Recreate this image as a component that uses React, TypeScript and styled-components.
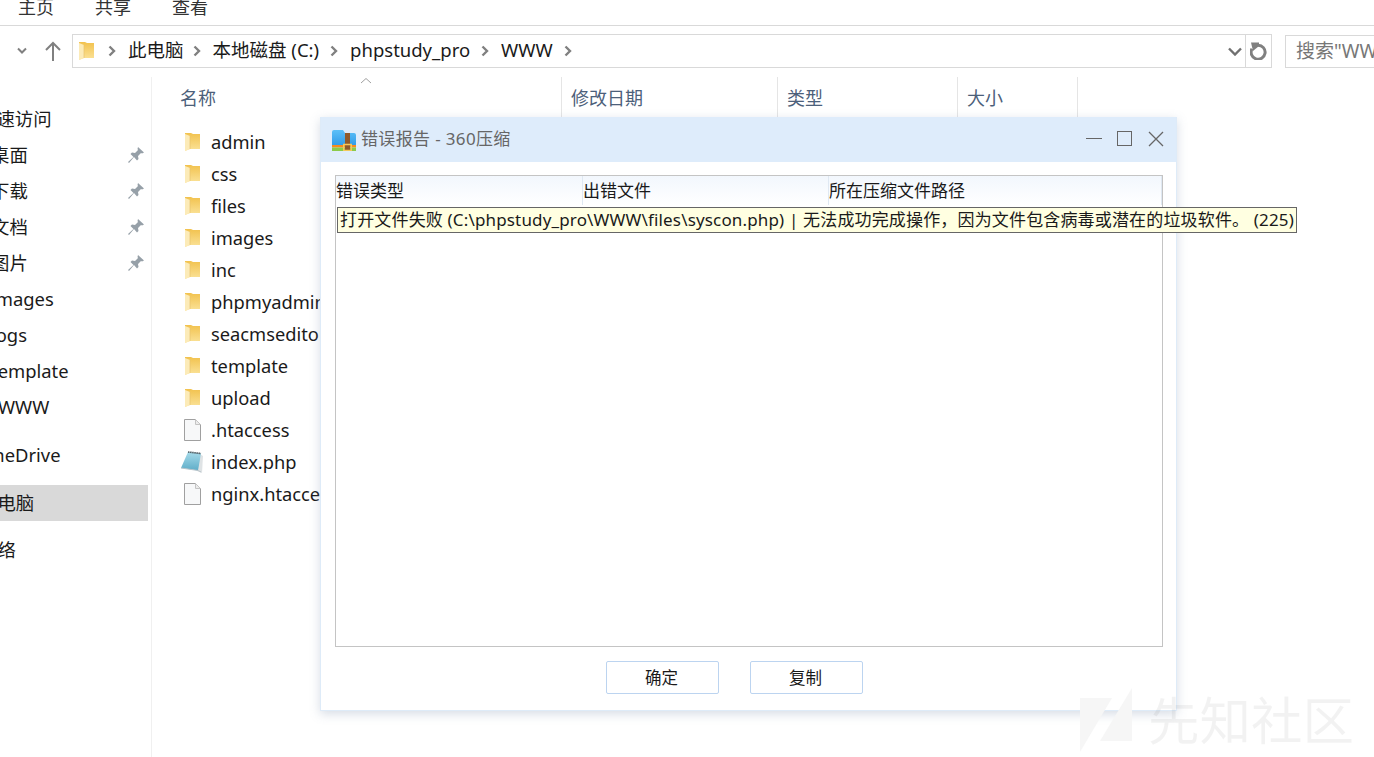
import React from 'react'
import styled, { createGlobalStyle } from 'styled-components'

const GlobalStyle = createGlobalStyle`
  html, body {
    margin: 0;
    padding: 0;
    background: #fff;
  }
  body {
    font-family: "Noto Sans", "Noto Sans CJK SC", sans-serif;
    overflow: hidden;
  }
`

const Page = styled.div`
  position: relative;
  width: 1374px;
  height: 757px;
  overflow: hidden;
  background: #fff;
  display: flex;
  flex-direction: column;
`

const Ribbon = styled.div`
  height: 25px;
  flex: none;
  display: flex;
  gap: 41px;
  padding-left: 18px;
  border-bottom: 1px solid #d9d9d9;
  overflow: hidden;
`

const RibbonTab = styled.span`
  font-size: 18px;
  line-height: 24px;
  margin-top: -5px;
  color: #333;
`

const AddressRow = styled.div`
  height: 34px;
  flex: none;
  margin-top: 8px;
  display: flex;
  align-items: center;
`

const NavIcons = styled.div`
  width: 72px;
  flex: none;
  display: flex;
  align-items: center;
  padding-left: 17px;
  gap: 17px;
  box-sizing: border-box;
`

const AddressBox = styled.div`
  width: 1200px;
  height: 34px;
  flex: none;
  box-sizing: border-box;
  border: 1px solid #d9d9d9;
  display: flex;
  align-items: center;
  padding-left: 6px;
`

const Crumb = styled.span<{ $after?: number }>`
  font-size: 18.5px;
  line-height: 26px;
  padding-bottom: 3px;
  color: #1a1a1a;
  white-space: nowrap;
  margin-right: ${(p) => p.$after ?? 11}px;
`

const CrumbArrow = styled.svg`
  width: 8px;
  height: 12px;
  flex: none;
  margin-right: 12px;
`

const FolderGap = styled.span`
  width: 14px;
  flex: none;
`

const AddressTail = styled.div`
  margin-left: auto;
  display: flex;
  align-items: center;
  height: 100%;
`

const RefreshCell = styled.div`
  width: 25px;
  height: 100%;
  margin-left: 3px;
  border-left: 1px solid #d9d9d9;
  display: flex;
  align-items: center;
  justify-content: center;
`

const SearchBox = styled.div`
  width: 89px;
  height: 33px;
  flex: none;
  margin-left: 13px;
  box-sizing: border-box;
  border: 1px solid #d9d9d9;
  border-right: none;
  font-size: 19px;
  line-height: 30px;
  padding-left: 10px;
  color: #777;
  white-space: nowrap;
  overflow: hidden;
`

const Body = styled.div`
  flex: 1;
  display: flex;
  min-height: 0;
  margin-top: 9px;
`

const Sidebar = styled.nav`
  width: 152px;
  flex: none;
  box-sizing: border-box;
  border-right: 1px solid #f0f0f0;
  padding-top: 24px;
  overflow: hidden;
`

const SideRow = styled.div<{ $gap?: number; $active?: boolean }>`
  width: 148px;
  height: 36px;
  margin-top: ${(p) => p.$gap ?? 0}px;
  display: flex;
  align-items: center;
  background: ${(p) => (p.$active ? '#d9d9d9' : 'transparent')};
  overflow: hidden;
`

const SideLabel = styled.span<{ $shift: number }>`
  margin-left: ${(p) => p.$shift}px;
  padding-bottom: 2px;
  font-size: 18.4px;
  color: #1a1a1a;
  white-space: nowrap;
  flex: 1;
`

const PinIcon = styled.svg`
  width: 16px;
  height: 16px;
  flex: none;
  margin-right: 4px;
`

const FilePane = styled.main`
  flex: 1;
  min-width: 0;
`

const HeaderRow = styled.div`
  height: 40px;
  display: flex;
  position: relative;
`

const HeaderCell = styled.div<{ $width: number; $inset?: number }>`
  width: ${(p) => p.$width}px;
  flex: none;
  box-sizing: border-box;
  padding: 8px 0 0 ${(p) => p.$inset ?? 9}px;
  border-right: 1px solid #e5e5e5;
  font-size: 18px;
  line-height: 26px;
  color: #4c607a;
`

const SortCaret = styled.svg`
  position: absolute;
  left: 208px;
  top: 0;
  width: 12px;
  height: 8px;
`

const FileList = styled.ul`
  list-style: none;
  margin: 9px 0 0;
  padding: 0 0 0 29px;
`

const FileRow = styled.li`
  height: 32px;
  display: flex;
  align-items: center;
  gap: 7px;
  font-size: 18.3px;
  color: #1a1a1a;
  white-space: nowrap;
`

const FileName = styled.span`
  padding-bottom: 2px;
`

const IconSlot = styled.span`
  width: 23px;
  height: 20px;
  flex: none;
  display: flex;
  align-items: center;
  justify-content: center;
  & > svg {
    flex: none;
  }
`

const Dialog = styled.section`
  position: absolute;
  left: 320px;
  top: 117px;
  width: 857px;
  height: 594px;
  box-sizing: border-box;
  background: #fff;
  border: 1px solid #deebf8;
  border-top: none;
  box-shadow: 0 3px 10px rgba(120, 140, 170, 0.3);
  display: flex;
  flex-direction: column;
`

const TitleBar = styled.header`
  height: 45px;
  flex: none;
  box-sizing: border-box;
  background: #deecfb;
  display: flex;
  align-items: center;
  padding: 0 12px 1px 11px;
`

const ArchiveSlot = styled.span`
  display: flex;
  margin-top: 2px;
`

const TitleText = styled.span`
  margin-left: 5px;
  margin-bottom: 3px;
  font-size: 17px;
  letter-spacing: 0.35px;
  color: #666;
  flex: 1;
`

const WindowButtons = styled.div`
  display: flex;
  align-items: center;
  gap: 15px;
`

const DialogBody = styled.div`
  flex: 1;
  min-height: 0;
  padding: 13px 13px 0 14px;
  display: flex;
  flex-direction: column;
`

const ErrorTable = styled.div`
  height: 472px;
  flex: none;
  box-sizing: border-box;
  border: 1px solid #c4c4c4;
`

const TableHead = styled.div`
  height: 29px;
  display: flex;
  background: linear-gradient(#f2f7fd, #ffffff);
`

const TableHeadCell = styled.div<{ $width: number }>`
  width: ${(p) => p.$width}px;
  flex: none;
  box-sizing: border-box;
  font-size: 17px;
  line-height: 29px;
  color: #1a1a1a;
  border-right: 1px solid #dfe8f2;
  white-space: nowrap;
`

const DialogFooter = styled.footer`
  flex: 1;
  display: flex;
  gap: 31px;
  padding-top: 14px;
  padding-left: 271px;
`

const DialogButton = styled.button`
  width: 113px;
  height: 33px;
  box-sizing: border-box;
  background: #fff;
  border: 1px solid #bcd4f0;
  border-radius: 2px;
  font-family: inherit;
  font-size: 16.5px;
  color: #1a1a1a;
  padding: 0 2px 2px 0;
`

const ErrorTooltip = styled.div`
  position: absolute;
  left: 337px;
  top: 207px;
  width: 960px;
  height: 26px;
  box-sizing: border-box;
  background: #ffffe1;
  border: 1px solid #666;
  padding-left: 2px;
  font-size: 17px;
  letter-spacing: 0.16px;
  line-height: 23px;
  color: #1a1a1a;
  white-space: nowrap;
  overflow: hidden;
`

const Watermark = styled.div`
  position: absolute;
  left: 1080px;
  top: 688px;
  display: flex;
  align-items: center;
  gap: 15px;
  pointer-events: none;
`

const WatermarkText = styled.span`
  font-size: 51.5px;
  line-height: 60px;
  color: rgba(0, 0, 0, 0.05);
  white-space: nowrap;
`

function FolderIcon() {
  return (
    <svg width="15" height="18" viewBox="0 0 15 18">
      <defs>
        <linearGradient id="folderBody" x1="0" y1="0" x2="0" y2="1">
          <stop offset="0" stopColor="#f2c24e" />
          <stop offset="1" stopColor="#fbe39a" />
        </linearGradient>
      </defs>
      <path d="M0 0h6l2 1h7v15H5l-5 2z" fill="url(#folderBody)" />
      <path d="M0 1l5 2v13l-5 2z" fill="#fcebb8" />
      <path d="M5 3v13" stroke="#e8c36e" strokeWidth=".7" />
    </svg>
  )
}

function FileIcon() {
  return (
    <svg width="17" height="22" viewBox="0 0 17 22">
      <path d="M.5.500h11l5 5v16H.5z" fill="#f7f8f9" stroke="#a0a0a0" />
      <path d="M11.500.500v5h5" fill="#ececec" stroke="#c4c4c4" />
    </svg>
  )
}

function NotepadIcon() {
  return (
    <svg width="23" height="22" viewBox="0 0 23 22">
      <defs>
        <linearGradient id="notepadPaper" x1="0" y1="0" x2="0" y2="1">
          <stop offset="0" stopColor="#a6dbea" />
          <stop offset="1" stopColor="#5fadc8" />
        </linearGradient>
      </defs>
      <path d="M19 3l3 2-1 17-5-2z" fill="#dfe3e5" />
      <path d="M7 1l13 1.500L17 19.500 0 17z" fill="url(#notepadPaper)" />
      <path d="M7 1l13 1.500" stroke="#4d5a60" strokeWidth="1.600" strokeDasharray="1.500 .6" />
      <path d="M0 17l17 2.500 3 1.500" fill="none" stroke="#b9c4ca" />
    </svg>
  )
}

function Chevron() {
  return (
    <CrumbArrow viewBox="0 0 8 12">
      <path d="M1.500 1.500L6 6l-4.500 4.500" fill="none" stroke="#808080" strokeWidth="2.400" />
    </CrumbArrow>
  )
}

function Pin() {
  return (
    <PinIcon viewBox="0 0 16 16">
      <path
        d="M10 0l6 5.500-2 1-1-.5-3 3 .5 3-1.500 1.500-3-3.500L1 16l-1-1 5.500-5L2.500 7 4 5.500l3 .5 3-3-.5-1z"
        fill="#96a0a8"
      />
    </PinIcon>
  )
}

function ArchiveIcon() {
  return (
    <svg width="24" height="21" viewBox="0 0 24 21">
      <defs>
        <linearGradient id="archiveBlue" x1="0" y1="0" x2="0" y2="1">
          <stop offset="0" stopColor="#5cc0f8" />
          <stop offset="1" stopColor="#2f9ae8" />
        </linearGradient>
      </defs>
      <path d="M0 2q0-2 2-2h9l2 3h9q2 0 2 2v11H0z" fill="url(#archiveBlue)" />
      <path d="M0 15h24v2.500H0z" fill="#f68c1e" />
      <path d="M0 17.500h24V21H0z" fill="#8ccb4a" />
      <path d="M13 3h5v18h-5z" fill="#8f5a2c" />
      <path d="M11.700 14.500h7.600v6H11.700z" fill="none" stroke="#f4c95c" strokeWidth="1.400" />
    </svg>
  )
}

const sideItems = [
  { label: '快速访问', shift: -22 },
  { label: '桌面', shift: -9, pinned: true },
  { label: '下载', shift: -9, pinned: true },
  { label: '文档', shift: -9, pinned: true },
  { label: '图片', shift: -9, pinned: true },
  { label: 'images', shift: -9 },
  { label: 'logs', shift: -9 },
  { label: 'template', shift: -9 },
  { label: 'WWW', shift: -2 },
  { label: 'OneDrive', shift: -21, gap: 12 },
  { label: '此电脑', shift: -21, gap: 12, active: true },
  { label: '网络', shift: -21, gap: 11 },
]

const files = [
  { name: 'admin', icon: 'folder' },
  { name: 'css', icon: 'folder' },
  { name: 'files', icon: 'folder' },
  { name: 'images', icon: 'folder' },
  { name: 'inc', icon: 'folder' },
  { name: 'phpmyadmin', icon: 'folder' },
  { name: 'seacmseditor', icon: 'folder' },
  { name: 'template', icon: 'folder' },
  { name: 'upload', icon: 'folder' },
  { name: '.htaccess', icon: 'file' },
  { name: 'index.php', icon: 'php' },
  { name: 'nginx.htaccess', icon: 'file' },
]

function App() {
  return (
    <Page>
      <GlobalStyle />
      <Ribbon>
        <RibbonTab>主页</RibbonTab>
        <RibbonTab>共享</RibbonTab>
        <RibbonTab>查看</RibbonTab>
      </Ribbon>
      <AddressRow>
        <NavIcons>
          <svg width="10" height="8" viewBox="0 0 10 8">
            <path d="M1 1.500l4 4 4-4" fill="none" stroke="#808080" strokeWidth="2" />
          </svg>
          <svg width="18" height="20" viewBox="0 0 18 20">
            <path d="M9 20V2M2 9l7-7 7 7" fill="none" stroke="#808080" strokeWidth="2" />
          </svg>
        </NavIcons>
        <AddressBox>
          <FolderIcon />
          <FolderGap />
          <Chevron />
          <Crumb $after={9}>此电脑</Crumb>
          <Chevron />
          <Crumb>本地磁盘 (C:)</Crumb>
          <Chevron />
          <Crumb>phpstudy_pro</Crumb>
          <Chevron />
          <Crumb>WWW</Crumb>
          <Chevron />
          <AddressTail>
            <svg width="14" height="9" viewBox="0 0 14 9">
              <path d="M1 1.500l6 6 6-6" fill="none" stroke="#707070" strokeWidth="2.400" />
            </svg>
            <RefreshCell>
              <svg width="17" height="18" viewBox="0 0 17 18">
                <path d="M8 3.200a7 7 0 1 1-6 3.600" fill="none" stroke="#808080" strokeWidth="3" />
                <path d="M1 0.500h8v3.500L3 9z" fill="#808080" />
              </svg>
            </RefreshCell>
          </AddressTail>
        </AddressBox>
        <SearchBox>搜索"WWW"</SearchBox>
      </AddressRow>
      <Body>
        <Sidebar>
          {sideItems.map((item) => (
            <SideRow key={item.label} $gap={item.gap} $active={item.active}>
              <SideLabel $shift={item.shift}>{item.label}</SideLabel>
              {item.pinned && <Pin />}
            </SideRow>
          ))}
        </Sidebar>
        <FilePane>
          <HeaderRow>
            <SortCaret viewBox="0 0 12 8">
              <path d="M1 6l5-4.500L11 6" fill="none" stroke="#a0a0a0" />
            </SortCaret>
            <HeaderCell $width={410} $inset={28}>名称</HeaderCell>
            <HeaderCell $width={216}>修改日期</HeaderCell>
            <HeaderCell $width={180}>类型</HeaderCell>
            <HeaderCell $width={120}>大小</HeaderCell>
          </HeaderRow>
          <FileList>
            {files.map((file) => (
              <FileRow key={file.name}>
                <IconSlot>
                  {file.icon === 'folder' && <FolderIcon />}
                  {file.icon === 'file' && <FileIcon />}
                  {file.icon === 'php' && <NotepadIcon />}
                </IconSlot>
                <FileName>{file.name}</FileName>
              </FileRow>
            ))}
          </FileList>
        </FilePane>
      </Body>

      <Dialog>
        <TitleBar>
          <ArchiveSlot>
            <ArchiveIcon />
          </ArchiveSlot>
          <TitleText>错误报告 - 360压缩</TitleText>
          <WindowButtons>
            <svg width="16" height="16" viewBox="0 0 16 16">
              <path d="M0 7.500h16" stroke="#666" />
            </svg>
            <svg width="16" height="16" viewBox="0 0 16 16">
              <rect x=".5" y=".5" width="14" height="14" fill="none" stroke="#666" />
            </svg>
            <svg width="16" height="16" viewBox="0 0 16 16">
              <path d="M1 1l14 14M15 1L1 15" stroke="#666" strokeWidth="1.300" />
            </svg>
          </WindowButtons>
        </TitleBar>
        <DialogBody>
          <ErrorTable>
            <TableHead>
              <TableHeadCell $width={247}>错误类型</TableHeadCell>
              <TableHeadCell $width={246}>出错文件</TableHeadCell>
              <TableHeadCell $width={333}>所在压缩文件路径</TableHeadCell>
            </TableHead>
          </ErrorTable>
          <DialogFooter>
            <DialogButton>确定</DialogButton>
            <DialogButton>复制</DialogButton>
          </DialogFooter>
        </DialogBody>
      </Dialog>

      <ErrorTooltip>
        打开文件失败 (C:\phpstudy_pro\WWW\files\syscon.php) | 无法成功完成操作，因为文件包含病毒或潜在的垃圾软件。 (225)
      </ErrorTooltip>

      <Watermark>
        <svg width="53" height="64" viewBox="0 0 53 64">
          <path d="M0 10h32L0 64z" fill="#f6f6f6" />
          <path d="M52 0v53H20z" fill="#f6f6f6" />
        </svg>
        <WatermarkText>先知社区</WatermarkText>
      </Watermark>
    </Page>
  )
}

export default App
